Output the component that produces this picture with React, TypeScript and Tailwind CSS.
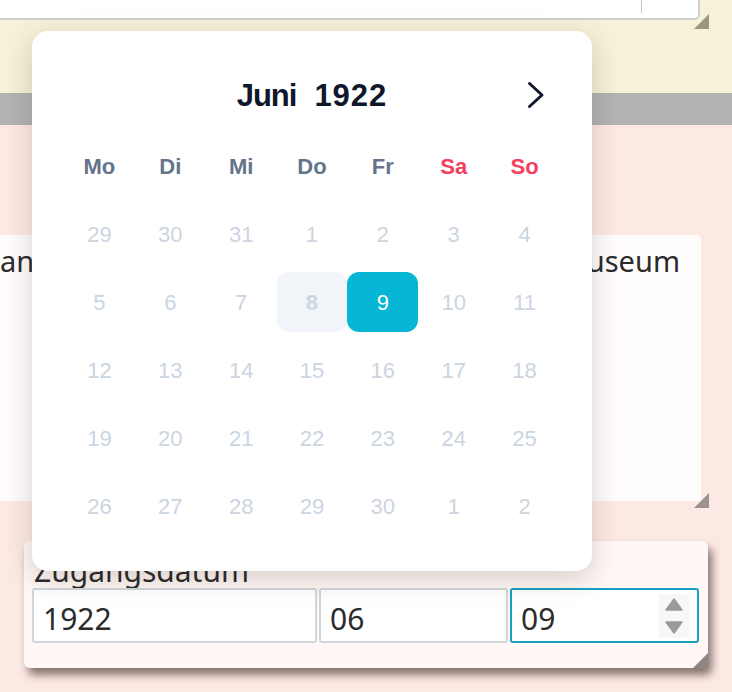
const weekdays = [
  { label: "Mo", weekend: false },
  { label: "Di", weekend: false },
  { label: "Mi", weekend: false },
  { label: "Do", weekend: false },
  { label: "Fr", weekend: false },
  { label: "Sa", weekend: true },
  { label: "So", weekend: true },
];

const days = [
  29, 30, 31, 1, 2, 3, 4,
  5, 6, 7, 8, 9, 10, 11,
  12, 13, 14, 15, 16, 17, 18,
  19, 20, 21, 22, 23, 24, 25,
  26, 27, 28, 29, 30, 1, 2,
];

function ResizeGrip({ className, color }: { className: string; color: string }) {
  return (
    <svg className={className} width="15" height="15" viewBox="0 0 15 15">
      <polygon points="15,0 15,15 0,15" fill={color} />
    </svg>
  );
}

function DatePopup() {
  return (
    <div className="absolute left-[32px] top-[31px] w-[560px] h-[540px] rounded-[16px] bg-white shadow-[0_8px_28px_rgba(60,40,30,0.2)] px-[32px] pt-[40px] font-['Liberation_Sans',Arial,sans-serif]">
      {/* Header */}
      <div className="flex items-center h-[48px]">
        <div className="w-[48px]" />
        <div className="flex-1 flex justify-center gap-[18px] text-[31px] font-bold text-[#0f172a] leading-none">
          <span className="tracking-[-1px]">Juni</span>
          <span className="tracking-[1px]">1922</span>
        </div>
        <button className="w-[48px] h-[48px] flex items-center justify-center">
          <svg width="20" height="28" viewBox="0 0 20 28">
            <polyline points="3.5,2.5 16,14 3.5,25.5" fill="none" stroke="#0f172a" strokeWidth="3" strokeLinecap="round" strokeLinejoin="round" />
          </svg>
        </button>
      </div>

      {/* Grid */}
      <div className="grid grid-cols-7 auto-rows-[60px] gap-y-[8px] mt-[17px]">
        {weekdays.map((w) => (
          <div
            key={w.label}
            className={`flex items-center justify-center text-[22px] font-bold ${
              w.weekend ? "text-[#f43f5e]" : "text-[#64748b]"
            }`}
          >
            {w.label}
          </div>
        ))}
        {days.map((d, i) => {
          if (i === 11) {
            return (
              <div key={i} className="flex items-center justify-center rounded-[12px] bg-[#06b6d4] text-white text-[22px]">
                {d}
              </div>
            );
          }
          if (i === 10) {
            return (
              <div key={i} className="flex items-center justify-center rounded-[12px] bg-[#f1f5f9] text-[#cbd5e1] text-[22px] font-bold">
                {d}
              </div>
            );
          }
          return (
            <div key={i} className="flex items-center justify-center text-[22px] text-[#cbd5e1]">
              {d}
            </div>
          );
        })}
      </div>
    </div>
  );
}

export default function App() {
  return (
    <div className="relative w-[732px] h-[692px] overflow-hidden bg-[#fde9e3] font-['Noto_Sans',sans-serif] text-[#2b2b2b]">
      {/* Top section */}
      <section className="relative h-[93px] bg-[#f6f1d9]">
        <div className="relative w-[700px] h-[20px] bg-white border-b-2 border-r-2 border-[#cfcfcf] rounded-br-[6px]">
          <div className="absolute left-[641px] top-0 w-px h-[13px] bg-[#c4c4c4]" />
        </div>
        <ResizeGrip className="absolute left-[694px] top-[14px]" color="#9b9681" />
      </section>

      <div className="h-[32px] bg-[#b3b3b3]" />

      {/* Lower section */}
      <section className="relative pt-[110px]">
        <div className="relative w-[701px] h-[266px] bg-[#fffcfc] rounded-tr-[4px]">
          <div className="flex justify-between pt-[6px] pr-[21px] text-[29px] leading-[40px] whitespace-nowrap">
            <span>an</span>
            <span>Museum</span>
          </div>
        </div>
        <ResizeGrip className="absolute left-[694px] top-[368px]" color="#9d9290" />

        {/* Date card */}
        <div className="relative ml-[24px] mt-[40px] w-[684px] h-[127px] rounded-[6px] bg-[#fff8f6] shadow-[4px_7px_8px_rgba(40,20,15,0.55)] pl-[8px] pr-[9px] pt-[13px]">
          <div className="ml-[2px] text-[30px] leading-[34px]">Zugangsdatum</div>
          <div className="flex gap-[2px] text-[30px]">
            <div className="w-[285px] h-[55px] flex items-center pl-[9px] pt-[5px] border-2 border-[#d0d8da] rounded-[3px] bg-white">
              1922
            </div>
            <div className="w-[189px] h-[55px] flex items-center pl-[9px] pt-[5px] border-2 border-[#d0d8da] rounded-[3px] bg-white">
              06
            </div>
            <div className="w-[189px] h-[55px] flex items-center justify-between pl-[9px] pr-[8px] border-2 border-[#1a9fbf] rounded-[3px] bg-white">
              <span className="pt-[5px]">09</span>
              <div className="w-[30px] h-[44px] bg-[#f7f7f7] flex flex-col items-center justify-between py-[4px]">
                <svg width="18" height="13" viewBox="0 0 18 13">
                  <path d="M9 1 L17 12 L1 12 Z" fill="#9a9a9a" strokeLinejoin="round" stroke="#9a9a9a" strokeWidth="1.5" />
                </svg>
                <svg width="18" height="13" viewBox="0 0 18 13">
                  <path d="M1 1 L17 1 L9 12 Z" fill="#9a9a9a" strokeLinejoin="round" stroke="#9a9a9a" strokeWidth="1.5" />
                </svg>
              </div>
            </div>
          </div>
          <ResizeGrip className="absolute right-0 bottom-0" color="#8e8683" />
        </div>
      </section>

      <DatePopup />
    </div>
  );
}
